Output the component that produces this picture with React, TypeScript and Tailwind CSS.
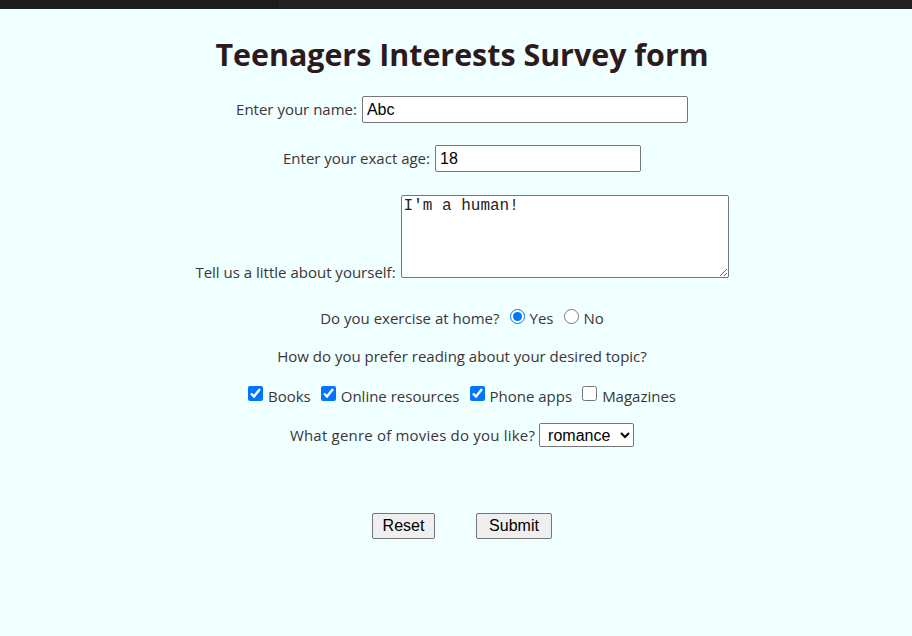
import React from "react";

export default function App() {
  const label = "text-[15px] text-[#3d3535]";
  const arial = { fontFamily: '"Liberation Sans", Arial, sans-serif' };
  return (
    <div className="w-[912px] h-[636px] overflow-hidden bg-[#f0ffff]" style={{ fontFamily: '"Open Sans", "Noto Sans", sans-serif' }}>
      <div className="flex h-[9px]">
        <div className="w-[279px] bg-[#1c1c1c]" />
        <div className="flex-1 bg-[#232323]" />
      </div>
      <div className="flex flex-col items-center pl-[12px]">
        <h1 className="mt-[24px] text-[30.4px] leading-[44px] font-bold text-[#2e1a1c]">Teenagers Interests Survey form</h1>
        <div className="mt-[19px] flex items-center gap-[5px] h-[27px]">
          <span className={label}>Enter your name:</span>
          <input defaultValue="Abc" className="w-[326px] h-[27px] border border-[#767676] rounded-[2px] bg-white px-[4px] text-[16px] text-black" style={arial} />
        </div>
        <div className="mt-[22px] flex items-center gap-[5px] h-[27px]">
          <span className={label}>Enter your exact age:</span>
          <input defaultValue="18" className="w-[206px] h-[27px] border border-[#767676] rounded-[2px] bg-white px-[4px] text-[16px] text-black" style={arial} />
        </div>
        <div className="mt-[23px] flex items-end gap-[5px]">
          <span className={`${label} leading-[20px] mb-[-4px]`}>Tell us a little about yourself:</span>
          <textarea defaultValue="I'm a human!" className="w-[328px] h-[83px] border border-[#767676] rounded-[2px] bg-white px-[2px] py-[1px] text-[16px] leading-[19px] text-[#222] resize" style={{ fontFamily: '"Liberation Mono", "Courier New", monospace' }} />
        </div>
        <div className="mt-[28px] flex items-center h-[24px]">
          <span className={label}>Do you exercise at home?</span>
          <label className={`ml-[10px] flex items-center ${label}`}>
            <input type="radio" name="ex" defaultChecked className="w-[15px] h-[15px] mr-[5px] mb-[4px] accent-[#0075ff]" />
            Yes
          </label>
          <label className={`ml-[11px] flex items-center ${label}`}>
            <input type="radio" name="ex" className="w-[15px] h-[15px] mr-[4px] mb-[4px]" />
            No
          </label>
        </div>
        <div className={`mt-[14px] h-[24px] flex items-center ${label}`}>How do you prefer reading about your desired topic?</div>
        <div className="mt-[16px] flex items-center h-[24px]">
          {[
            ["Books", true],
            ["Online resources", true],
            ["Phone apps", true],
            ["Magazines", false],
          ].map(([t, c], i) => (
            <label key={i} className={`flex items-center ${label} ${i > 0 ? "ml-[10px]" : ""}`}>
              <input type="checkbox" defaultChecked={c as boolean} className="w-[15px] h-[15px] mr-[5px] mb-[5px] accent-[#0075ff]" />
              {t as string}
            </label>
          ))}
        </div>
        <div className="mt-[15px] flex items-center gap-[4px] h-[24px]">
          <span className={`${label} tracking-[0.2px]`}>What genre of movies do you like?</span>
          <select defaultValue="romance" className="w-[95px] h-[24px] border border-[#767676] rounded-[2px] bg-white pl-[4px] text-[16px] text-black" style={arial}>
            <option value="action">action</option>
            <option value="romance">romance</option>
            <option value="comedy">comedy</option>
          </select>
        </div>
        <div className="mt-[66px] flex items-center gap-[41px]">
          <button className="w-[63px] h-[26px] bg-[#efefef] border border-[#767676] rounded-[2px] text-[16px] text-black" style={arial}>Reset</button>
          <button className="w-[76px] h-[26px] bg-[#efefef] border border-[#767676] rounded-[2px] text-[16px] text-black" style={arial}>Submit</button>
        </div>
      </div>
    </div>
  );
}
